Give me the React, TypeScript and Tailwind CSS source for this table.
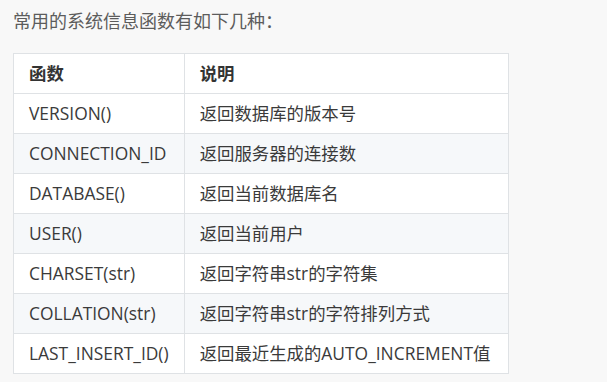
const rows: [string, string][] = [
  ['VERSION()', '返回数据库的版本号'],
  ['CONNECTION_ID', '返回服务器的连接数'],
  ['DATABASE()', '返回当前数据库名'],
  ['USER()', '返回当前用户'],
  ['CHARSET(str)', '返回字符串str的字符集'],
  ['COLLATION(str)', '返回字符串str的字符排列方式'],
  ['LAST_INSERT_ID()', '返回最近生成的AUTO_INCREMENT值'],
];

export default function App() {
  return (
    <div
      className="w-[607px] h-[382px] bg-[#f8f8f8] px-[13px] pt-[10px] text-[17.4px] text-[#3a3a3a]"
      style={{ fontFamily: '"Open Sans", "Noto Sans CJK SC", sans-serif' }}
    >
      <p className="h-[22px] leading-[22px] text-[#5c5c5c] text-[18px]">常用的系统信息函数有如下几种：</p>
      <table className="mt-[21px] w-[496px] border-collapse">
        <thead>
          <tr className="bg-white">
            <th className="w-[170px] h-[40px] border border-[#dfe2e5] px-[15px] text-left font-bold text-[#333]">函数</th>
            <th className="h-[40px] border border-[#dfe2e5] px-[15px] text-left font-bold text-[#333]">说明</th>
          </tr>
        </thead>
        <tbody>
          {rows.map(([fn, desc], i) => (
            <tr key={fn} className={i % 2 === 1 ? 'bg-[#f6f8fa]' : 'bg-white'}>
              <td className="h-[40px] border border-[#dfe2e5] px-[15px]">{fn}</td>
              <td className="h-[40px] border border-[#dfe2e5] px-[15px]">{desc}</td>
            </tr>
          ))}
        </tbody>
      </table>
    </div>
  );
}
